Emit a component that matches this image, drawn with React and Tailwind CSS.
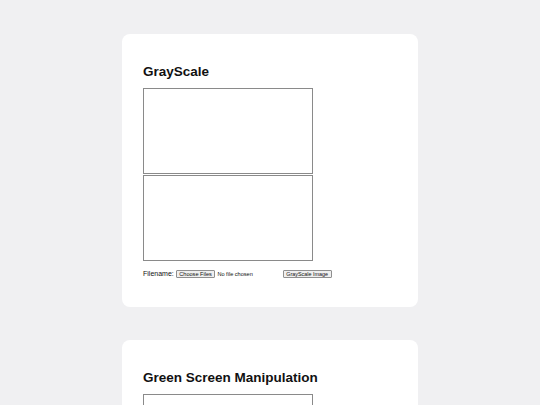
export default function App() {
  return (
    <div className="min-h-screen bg-[#f0f0f2] pt-[34px] pb-10 font-['Liberation_Sans',Arial,sans-serif] text-[#111]">
      <div className="mx-auto flex w-[296px] flex-col gap-[33px]">
        <FilterCard title="GrayScale" action="GrayScale Image" />
        <FilterCard title="Green Screen Manipulation" action="Load Images" />
      </div>
    </div>
  );
}

function FilterCard({ title, action }) {
  return (
    <section className="rounded-[8px] bg-white px-[21px] pt-[30px] pb-[29px]">
      <h2 className="mb-2 text-[13.5px] font-bold leading-[16px]">{title}</h2>
      <div className="h-[86px] w-[170px] border border-[#8a8a8a]" />
      <div className="mt-px h-[86px] w-[170px] border border-[#8a8a8a]" />
      <div className="mt-[9px] flex items-center text-[7px] leading-[8px] text-[#111]">
        <span>Filename:</span>
        <span className="ml-[2px] rounded-[1px] border border-[#8f8f8f] bg-[#efefef] px-[2.5px] text-[5.6px] leading-[6px]">
          Choose Files
        </span>
        <span className="ml-[2px] text-[5.6px] leading-[6px]">No file chosen</span>
        <span className="ml-[30px] rounded-[1px] border border-[#8f8f8f] bg-[#efefef] px-[2.5px] text-[5.4px] leading-[6px]">
          {action}
        </span>
      </div>
    </section>
  );
}
